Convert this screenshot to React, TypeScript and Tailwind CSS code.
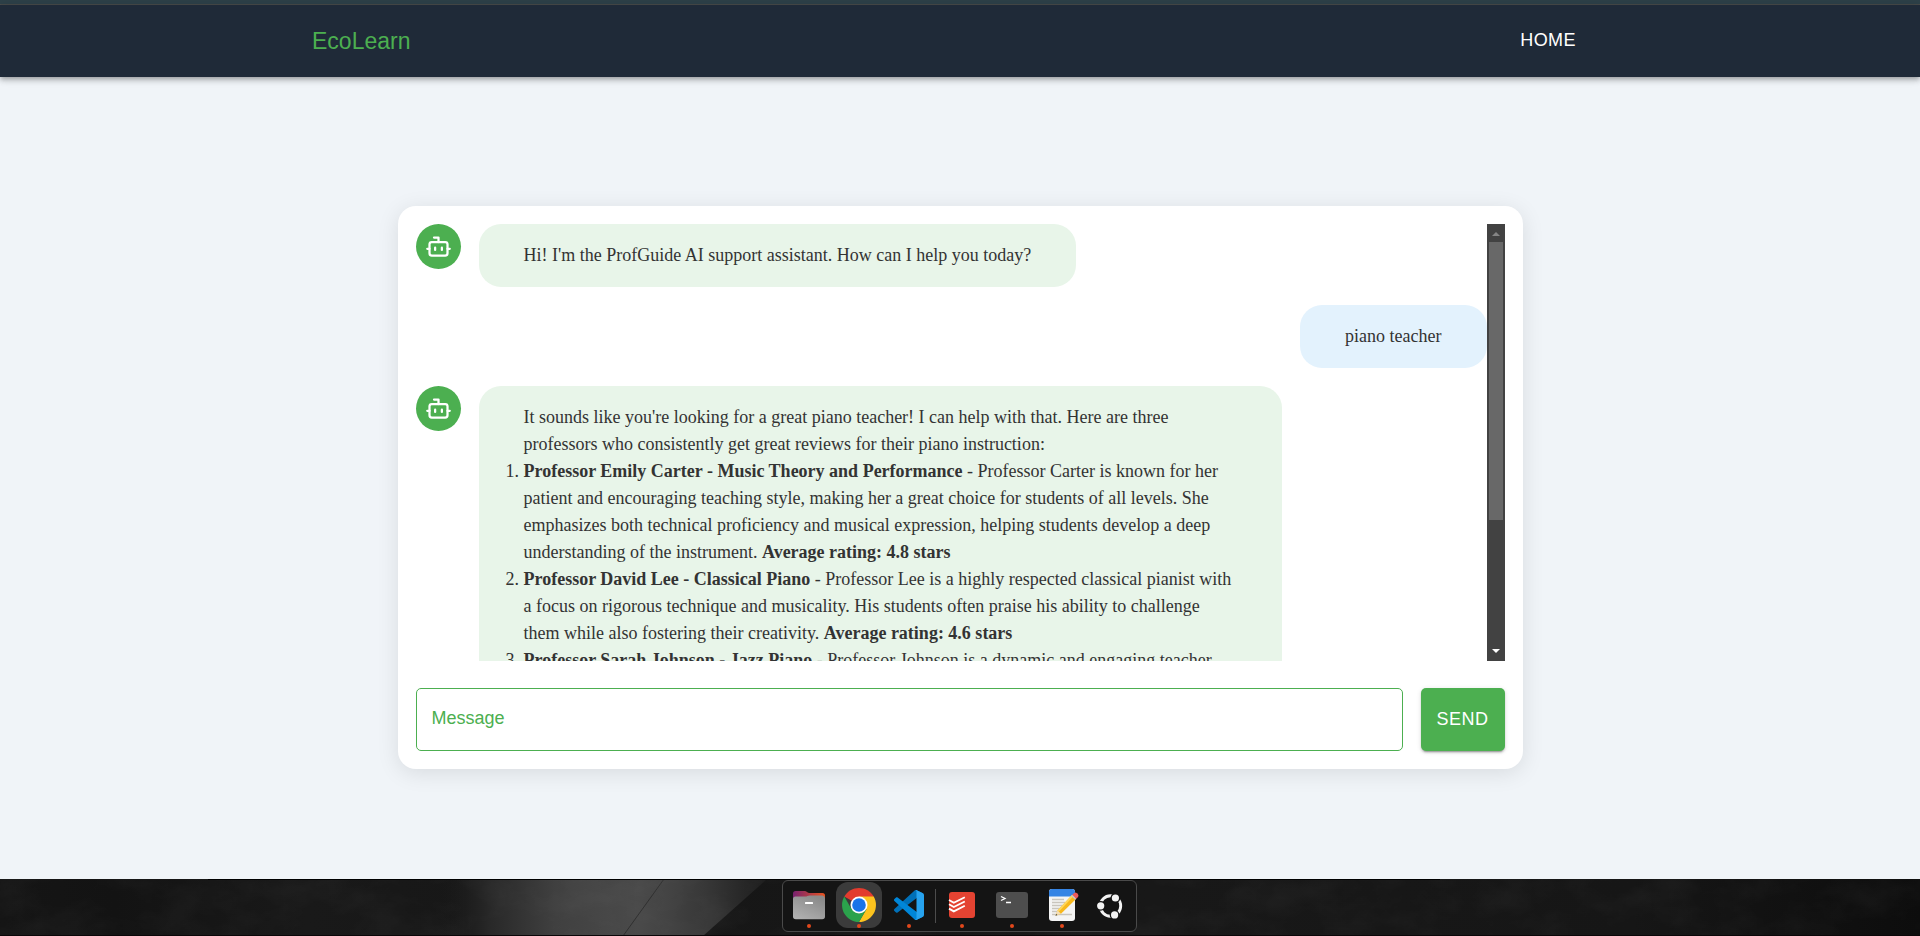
import type { ReactNode } from "react";
import { Bot } from "lucide-react";

function Wallpaper() {
  return (
    <svg
      className="absolute inset-0 h-full w-full"
      viewBox="0 0 1920 57"
      preserveAspectRatio="xMidYMid slice"
      aria-hidden="true"
    >
      <defs>
        <linearGradient id="wall" x1="0" x2="1920" y1="0" y2="0" gradientUnits="userSpaceOnUse">
          <stop offset="0" stopColor="#151515" />
          <stop offset="0.06" stopColor="#131313" />
          <stop offset="0.16" stopColor="#191919" />
          <stop offset="0.3" stopColor="#161616" />
          <stop offset="0.6" stopColor="#181818" />
          <stop offset="0.85" stopColor="#161616" />
          <stop offset="1" stopColor="#0d0d0d" />
        </linearGradient>
        <linearGradient id="beam" x1="440" x2="770" y1="0" y2="0" gradientUnits="userSpaceOnUse">
          <stop offset="0" stopColor="#1b1b1b" stopOpacity="0" />
          <stop offset="0.15" stopColor="#282828" />
          <stop offset="0.35" stopColor="#404040" />
          <stop offset="0.6" stopColor="#4a4a4a" />
          <stop offset="0.8" stopColor="#383838" />
          <stop offset="1" stopColor="#1c1c1c" />
        </linearGradient>
        <filter id="grain" x="0" y="0" width="100%" height="100%">
          <feTurbulence type="fractalNoise" baseFrequency="0.02 0.03" numOctaves="6" seed="11" />
          <feColorMatrix values="0 0 0 0 1  0 0 0 0 1  0 0 0 0 1  0.12 0 0 0 -0.045" />
        </filter>
      </defs>
      <rect width="1920" height="57" fill="url(#wall)" />
      <path d="M440 0H767L703 57H440Z" fill="url(#beam)" />
      <path d="M664 0L623 57" stroke="#303030" strokeWidth="1" />
      <rect width="1920" height="57" filter="url(#grain)" opacity="0.5" />
      <rect x="208" width="1232" height="1" fill="#000" />
      <rect y="56" width="1920" height="1" fill="#0b0709" />
    </svg>
  );
}

function FilesIcon() {
  return (
    <svg width="50" height="50" viewBox="0 0 50 50" aria-hidden="true">
      <defs>
        <linearGradient id="folderBack" x1="0" x2="1">
          <stop offset="0" stopColor="#77216f" />
          <stop offset="1" stopColor="#e95420" />
        </linearGradient>
        <linearGradient id="folderFront" x1="0" x2="0.6" y1="1" y2="0">
          <stop offset="0" stopColor="#b4b4b4" />
          <stop offset="1" stopColor="#8b8b8b" />
        </linearGradient>
      </defs>
      <path d="M9 20V13.500Q9 11 11.500 11H20.500Q22 11 23 12T25.500 13H38.500Q41 13 41 15.500V20Z" fill="url(#folderBack)" />
      <path d="M9 19Q9 16.500 11.500 16.500H21Q22.500 16.500 23.500 16T26 15.500H38.500Q41 16 41 18.500V36.500Q41 39.300 38.200 39.300H11.800Q9 39.300 9 36.500Z" fill="url(#folderFront)" />
      <rect x="21" y="22" width="8" height="2" rx="0.5" fill="#fff" />
    </svg>
  );
}

function ChromeIcon() {
  return (
    <svg width="50" height="50" viewBox="0 0 50 50" aria-hidden="true">
      <path d="M25 25L10.300 16.500A17 17 0 0 1 39.700 16.500Z" fill="#e33b2e" />
      <path d="M25 16.500H39.700A17 17 0 0 1 25 42L32.400 29.200Z" fill="#fcc31e" />
      <path d="M10.300 16.500L17.600 29.200L25 33.500L32.400 29.200L25 42A17 17 0 0 1 10.300 16.500Z" fill="#2ba24c" />
      <circle cx="25" cy="25" r="8.500" fill="#fff" />
      <circle cx="25" cy="25" r="6.800" fill="#1a73e8" />
    </svg>
  );
}

function CodeIcon() {
  return (
    <svg width="50" height="50" viewBox="0 0 50 50" aria-hidden="true">
      <g transform="translate(10 10) scale(0.3)">
        <path
          fill="#0070b8"
          d="M96.461 10.796L75.857.876C73.472-.273 70.622.212 68.75 2.083L1.299 63.583C-.516 65.237-.514 68.094 1.303 69.745L6.813 74.754C8.298 76.104 10.535 76.204 12.134 74.99L93.361 13.37C96.086 11.303 100 13.246 100 16.667V16.427C100 14.026 98.625 11.838 96.461 10.796Z"
        />
        <path
          fill="#0086d8"
          d="M96.461 89.204L75.857 99.124C73.472 100.273 70.622 99.788 68.75 97.917L1.299 36.417C-.516 34.763-.514 31.906 1.303 30.255L6.813 25.246C8.298 23.896 10.535 23.796 12.134 25.01L93.361 86.63C96.086 88.697 100 86.754 100 83.333V83.573C100 85.974 98.625 88.162 96.461 89.204Z"
        />
        <path
          fill="#27a3ef"
          d="M75.858 99.126C73.472 100.274 70.622 99.789 68.75 97.917C71.056 100.223 75 98.59 75 95.328V4.672C75 1.41 71.056-.223 68.75 2.083C70.622.211 73.472-.274 75.858.874L96.459 10.781C98.623 11.822 100 14.011 100 16.413V83.587C100 85.989 98.623 88.179 96.459 89.22Z"
        />
      </g>
    </svg>
  );
}

function TodoistIcon() {
  return (
    <svg width="50" height="50" viewBox="0 0 50 50" aria-hidden="true">
      <rect x="12" y="12" width="26" height="26" rx="3" fill="#e44332" />
      <path
        d="M12 20L16.800 22.800L27.800 17.200M12 24.300L16.800 27.100L27.800 21.500M12 28.600L16.800 31.400L27.800 25.800"
        fill="none"
        stroke="#fff"
        strokeWidth="1.800"
      />
    </svg>
  );
}

function TerminalIcon() {
  return (
    <svg width="50" height="50" viewBox="0 0 50 50" aria-hidden="true">
      <rect x="9" y="12" width="32" height="26" rx="3" fill="#4e4e4e" />
      <path d="M14 16.500L18 18.500L14 20.500M19 22.500H24" fill="none" stroke="#fff" strokeWidth="1.300" />
    </svg>
  );
}

function NotesIcon() {
  return (
    <svg width="50" height="50" viewBox="0 0 50 50" aria-hidden="true">
      <rect x="12" y="9" width="26" height="32" rx="3" fill="#f4f4f4" />
      <path d="M12 16.500V12Q12 9 15 9H35Q38 9 38 12V16.500Z" fill="#3584e4" />
      <path
        d="M15 19.500H27M15 22.500H28M15 25.500H26M15 28.500H24M15 31.500H21M15 34.500H35"
        stroke="#c9c5bd"
        strokeWidth="1.300"
      />
      <path d="M18.500 35.800L20.500 30.500L35 15L39 19L24 33.800Z" fill="#f8b81c" />
      <path d="M20.500 30.500L35 15L36.300 16.300L21.800 31.700Z" fill="#ffd75e" />
      <path d="M18.500 35.800L20.500 30.500L24 33.800Z" fill="#f3deb8" />
      <path d="M18.500 35.800L19.200 33.900L20.500 35.100Z" fill="#333" />
      <path d="M35 15L37.200 12.900Q38.500 12 40 13.200L41 14.300Q42 15.800 41 17L39 19Z" fill="#ed5b5b" />
      <path d="M34.200 15.900L35.200 14.800L39.200 18.800L38.200 19.800Z" fill="#c8c8c8" />
    </svg>
  );
}

function UbuntuIcon() {
  return (
    <svg width="46" height="50" viewBox="0 0 46 50" aria-hidden="true">
      <circle cx="23.500" cy="26" r="10.200" fill="none" stroke="#f3f3f3" strokeWidth="2.900" />
      <circle cx="13.700" cy="25.800" r="4.900" fill="#141414" />
      <circle cx="28.400" cy="18" r="4.900" fill="#141414" />
      <circle cx="27.600" cy="34.900" r="4.900" fill="#141414" />
      <circle cx="13.700" cy="25.800" r="3.600" fill="#f3f3f3" />
      <circle cx="28.400" cy="18" r="3.600" fill="#f3f3f3" />
      <circle cx="27.600" cy="34.900" r="3.600" fill="#f3f3f3" />
    </svg>
  );
}

type DockItemProps = { label: string; running?: boolean; active?: boolean; children: ReactNode };

function DockItem({ label, running, active, children }: DockItemProps) {
  return (
    <button type="button" aria-label={label} className="relative flex h-12 items-center justify-center">
      {active && <span className="absolute inset-x-[2px] inset-y-px rounded-xl bg-[#3b3b3b]" />}
      <span className="relative">{children}</span>
      {running && (
        <span className="absolute bottom-px left-1/2 size-1 -translate-x-1/2 rounded-full bg-[#e2471b]" />
      )}
    </button>
  );
}

function Dock() {
  return (
    <footer className="relative flex h-[57px] shrink-0 justify-center bg-[#151515] pt-px pr-px">
      <Wallpaper />
      <nav
        aria-label="Dock"
        className="relative flex h-[52px] rounded-md border border-[#4a4a4a] bg-[#141414] pr-[3px] pl-px"
      >
        <DockItem label="Files" running>
          <FilesIcon />
        </DockItem>
        <DockItem label="Chrome" running active>
          <ChromeIcon />
        </DockItem>
        <DockItem label="Code" running>
          <CodeIcon />
        </DockItem>
        <span className="mx-px my-2 w-px bg-[#4c4c4c]" />
        <DockItem label="Todoist" running>
          <TodoistIcon />
        </DockItem>
        <DockItem label="Terminal" running>
          <TerminalIcon />
        </DockItem>
        <DockItem label="Notes" running>
          <NotesIcon />
        </DockItem>
        <DockItem label="Show applications">
          <UbuntuIcon />
        </DockItem>
      </nav>
    </footer>
  );
}

function AssistantMessage({ children }: { children: ReactNode }) {
  return (
    <div className="flex items-start gap-[18px]">
      <div className="flex size-[45px] shrink-0 items-center justify-center rounded-full bg-[#4caf50] text-white">
        <Bot size={27} />
      </div>
      <div className="max-w-3/4 rounded-[22px] bg-[#e8f5e9] px-[45px] py-[18px]">{children}</div>
    </div>
  );
}

function UserMessage({ children }: { children: ReactNode }) {
  return (
    <div className="flex justify-end">
      <div className="max-w-3/4 rounded-[22px] bg-[#e3f2fd] px-[45px] py-[18px]">{children}</div>
    </div>
  );
}

function ScrollTrack() {
  return (
    <div className="flex w-[18px] shrink-0 flex-col bg-[#424242]" aria-hidden="true">
      <svg className="size-[18px]" viewBox="0 0 18 18">
        <path d="M5 12H13L9 8Z" fill="#858585" />
      </svg>
      <div className="grow px-[2px]">
        <div className="h-[278px] bg-[#686868]" />
      </div>
      <svg className="size-[18px]" viewBox="0 0 18 18">
        <path d="M5 6H13L9 10Z" fill="#fff" />
      </svg>
    </div>
  );
}

export default function App() {
  return (
    <div className="flex min-h-screen flex-col bg-[#f0f4f8] font-['Liberation_Sans',Arial,sans-serif]">
      <div className="h-[5px] shrink-0 border-b border-[#484b4a] bg-[#2d4048]" />
      <header className="relative h-[72px] shrink-0 bg-[#1f2a38] shadow-[0_2px_4px_-1px_rgba(0,0,0,0.2),0_4px_5px_0_rgba(0,0,0,0.14),0_1px_10px_0_rgba(0,0,0,0.12)]">
        <div className="mx-auto flex h-full max-w-[1350px] items-center justify-between px-[27px]">
          <a href="#" className="text-[23px] leading-9 text-[#4caf50]">
            EcoLearn
          </a>
          <a href="#" className="px-8 pb-[2px] text-[18px] leading-8 tracking-wide text-white">
            HOME
          </a>
        </div>
      </header>

      <main className="flex grow items-center justify-center px-6 pt-[18px]">
        <section className="flex w-full max-w-[1125px] flex-col gap-[27px] rounded-[18px] bg-white p-[18px] shadow-[0_4px_22px_rgba(0,0,0,0.1)]">
          <div className="flex h-[437px]">
            <div className="flex min-w-0 grow flex-col gap-[18px] overflow-y-auto font-['Liberation_Serif','Times_New_Roman',serif] text-[18px] leading-[27px] text-[#333] [scrollbar-width:none]">
              <AssistantMessage>
                <p>Hi! I'm the ProfGuide AI support assistant. How can I help you today?</p>
              </AssistantMessage>
              <UserMessage>
                <p>piano teacher</p>
              </UserMessage>
              <AssistantMessage>
                <p>
                  It sounds like you're looking for a great piano teacher! I can help with that. Here are three
                  professors who consistently get great reviews for their piano instruction:
                </p>
                <ol className="list-decimal">
                  <li>
                    <strong>Professor Emily Carter - Music Theory and Performance</strong> - Professor Carter is known
                    for her patient and encouraging teaching style, making her a great choice for students of all
                    levels. She emphasizes both technical proficiency and musical expression, helping students develop
                    a deep understanding of the instrument. <strong>Average rating: 4.8 stars</strong>
                  </li>
                  <li>
                    <strong>Professor David Lee - Classical Piano</strong> - Professor Lee is a highly respected
                    classical pianist with a focus on rigorous technique and musicality. His students often praise his
                    ability to challenge them while also fostering their creativity.{" "}
                    <strong>Average rating: 4.6 stars</strong>
                  </li>
                  <li>
                    <strong>Professor Sarah Johnson - Jazz Piano</strong> - Professor Johnson is a dynamic and engaging
                    teacher
                  </li>
                </ol>
              </AssistantMessage>
            </div>
            <ScrollTrack />
          </div>

          <form className="flex gap-[18px]" onSubmit={(e) => e.preventDefault()}>
            <input
              type="text"
              aria-label="Message"
              placeholder="Message"
              className="h-[63px] min-w-0 grow rounded-[5px] border border-[#4caf50] px-[15px] pb-[2px] text-[18px] text-[#333] outline-none placeholder:text-[#4caf50]"
            />
            <button
              type="submit"
              className="w-[84px] shrink-0 rounded-[5px] bg-[#4caf50] text-[18px] tracking-wide text-white shadow-[0_3px_1px_-2px_rgba(0,0,0,0.2),0_2px_2px_0_rgba(0,0,0,0.14),0_1px_5px_0_rgba(0,0,0,0.12)]"
            >
              SEND
            </button>
          </form>
        </section>
      </main>

      <Dock />
    </div>
  );
}
